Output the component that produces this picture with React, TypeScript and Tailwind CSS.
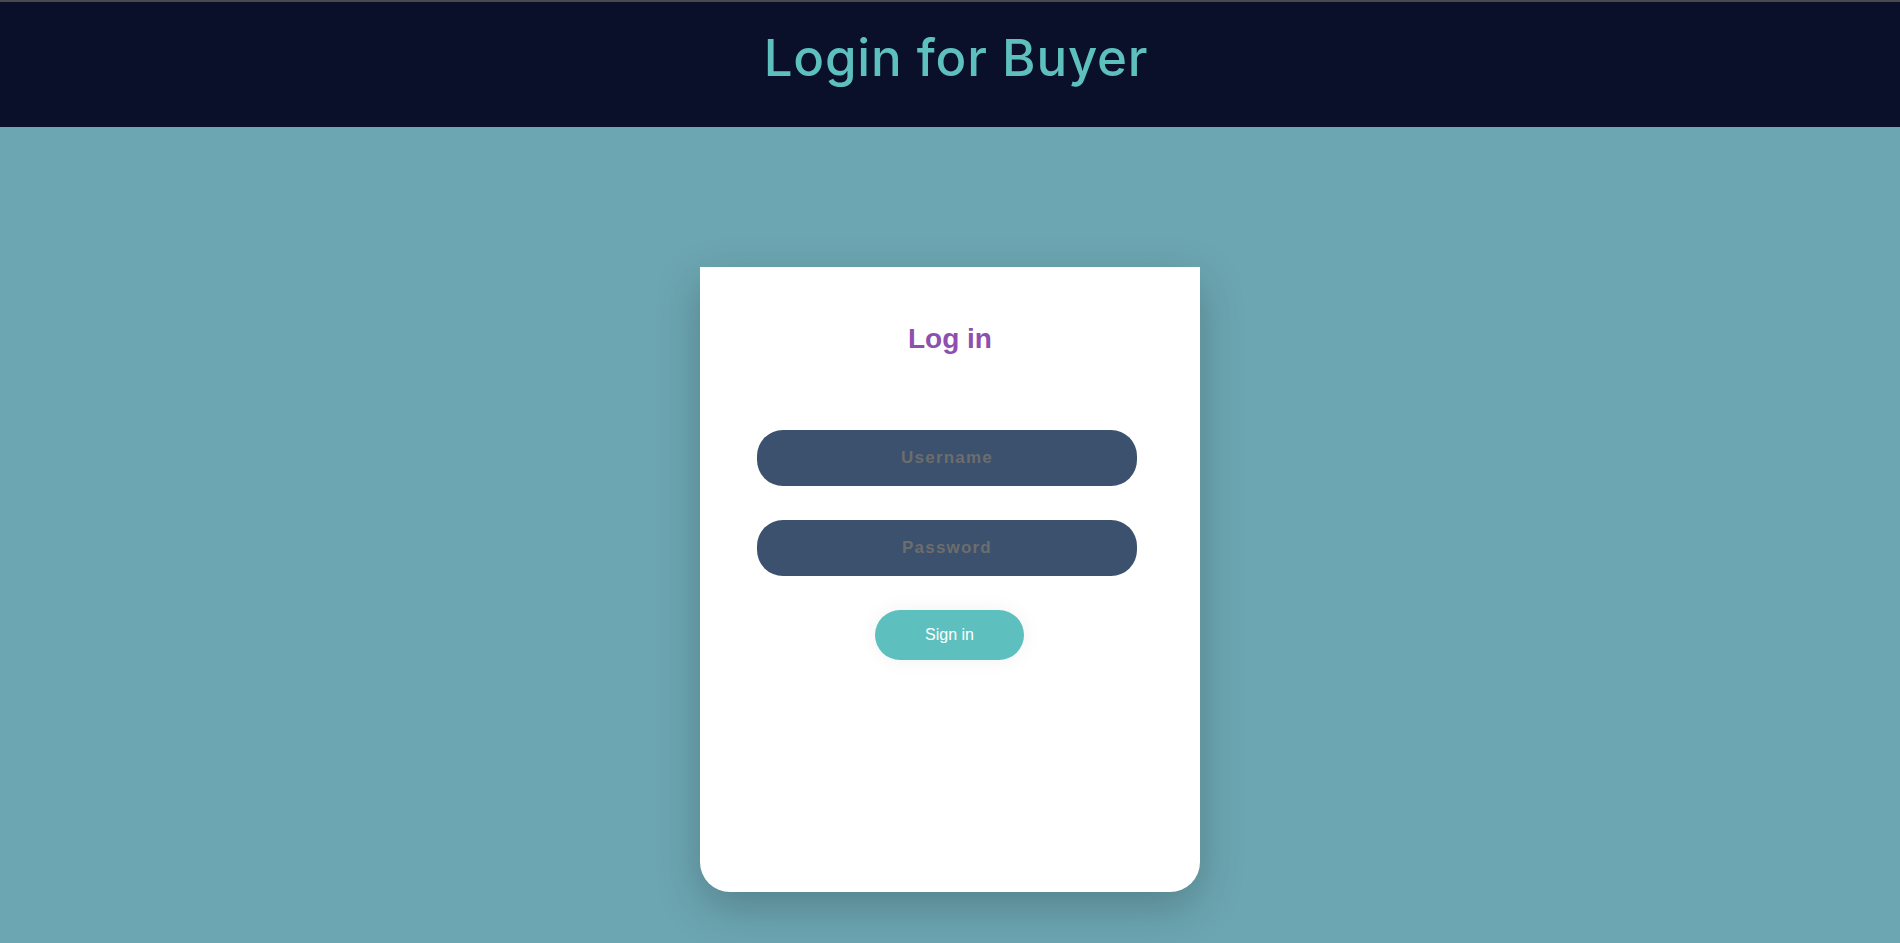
import React from "react";

export default function App() {
  return (
    <div className="min-h-screen bg-[#6ca6b2] border-t-2 border-[#4a4a4a]" style={{ fontFamily: '"Liberation Sans", Arial, sans-serif' }}>
      <header className="h-[125px] bg-[#0a1029] flex justify-center">
        <h1 className="pt-[26px] ml-[12px] text-[51px] leading-[60px] tracking-[0.8px] text-[#5ec0be] font-medium" style={{ fontFamily: 'Inter, "Noto Sans", sans-serif' }}>
          Login for Buyer
        </h1>
      </header>
      <main className="flex justify-center pt-[140px]">
        <div className="w-[500px] h-[625px] bg-white rounded-b-[30px] shadow-[0_15px_45px_rgba(0,0,0,0.22)] flex flex-col items-center pt-[56px]">
          <h2 className="text-[28px] leading-[32px] font-bold text-[#8e4fae]">Log in</h2>
          <form className="flex flex-col items-center mt-[75px] w-full" onSubmit={(e) => e.preventDefault()}>
            <input
              type="text"
              placeholder="Username"
              className="w-[380px] h-[56px] rounded-[26px] bg-[#3b516d] text-center text-[17px] font-bold tracking-[1.2px] text-white placeholder:text-[#6d6d6d] outline-none ml-[-6px]"
            />
            <input
              type="password"
              placeholder="Password"
              className="mt-[34px] w-[380px] h-[56px] rounded-[26px] bg-[#3b516d] text-center text-[17px] font-bold tracking-[1.2px] text-white placeholder:text-[#6d6d6d] outline-none ml-[-6px]"
            />
            <button
              type="submit"
              className="mt-[34px] w-[149px] h-[50px] rounded-full bg-[#5ec0be] text-white text-[16px] shadow-[0_0_20px_rgba(0,0,0,0.06)] ml-[-1px]"
            >
              Sign in
            </button>
          </form>
        </div>
      </main>
    </div>
  );
}
